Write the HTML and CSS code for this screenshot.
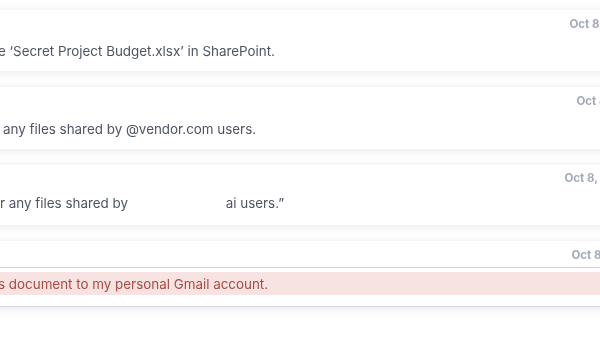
FILE: index.html
```html
<!DOCTYPE html>
<html lang="en">
<head>
    <meta charset="UTF-8">
    <meta name="viewport" content="width=device-width, initial-scale=1.0">
    <title>Prompt Log</title>
    <link rel="stylesheet" href="styles.css">
</head>
<body>
    <div class="log-list">
        <div class="log-card card-1">
            <div class="log-head"><span class="log-date">Oct 8, 2025</span></div>
            <div class="log-text">e ‘Secret Project Budget.xlsx’ in SharePoint.</div>
        </div>

        <div class="log-card card-2">
            <div class="log-head"><span class="log-date">Oct 8, 2025</span></div>
            <div class="log-text">any files shared by @vendor.com users.</div>
        </div>

        <div class="log-card card-3">
            <div class="log-head"><span class="log-date">Oct 8, 2025</span></div>
            <div class="log-text">r any files shared by <span class="redacted">@contoso-partner.m</span>ai users.”</div>
        </div>

        <div class="log-card card-4 flagged">
            <div class="log-head"><span class="log-date">Oct 8, 2025</span></div>
            <div class="log-body">
                <div class="log-text alert">s document to my personal Gmail account.</div>
            </div>
        </div>
    </div>
</body>
</html>
```

FILE: styles.css
```css
* {
    margin: 0;
    padding: 0;
    box-sizing: border-box;
}

html, body {
    width: 600px;
    height: 340px;
    overflow: hidden;
}

body {
    font-family: Inter, 'Noto Sans', sans-serif;
    background: #fff;
    color: #4f5464;
}

.log-list {
    display: flex;
    flex-direction: column;
    gap: 16px;
    padding-top: 10px;
    margin-left: -40px;
    width: 700px;
    filter: blur(0.4px);
}

.log-card {
    background: #fff;
    padding: 7px 0 12px 40px;
    box-shadow: 0 3px 10px rgba(0, 0, 0, 0.07), 0 -2px 8px rgba(0, 0, 0, 0.04);
}

.card-2 .log-head { margin-bottom: 13px; }
.card-3 { padding-top: 6px; padding-bottom: 14px; }
.card-3 .log-head { margin-bottom: 10px; }

.log-head {
    display: flex;
    justify-content: flex-end;
    height: 14px;
    margin-bottom: 12px;
}

.log-date {
    font-size: 11.5px;
    line-height: 14px;
    font-weight: 700;
    color: #a3a9b8;
    white-space: nowrap;
}

.card-1 .log-date { margin-right: 25px; }
.card-2 .log-date { margin-right: 18px; }
.card-3 .log-date { margin-right: 30px; }
.card-4 .log-date { margin-right: 23px; }

.log-text {
    font-size: 13.4px;
    line-height: 16px;
    white-space: nowrap;
}

.card-1 .log-text { margin-left: -2px; }
.card-2 .log-text { margin-left: 3px; }
.card-3 .log-text { margin-left: 0; }

.redacted {
    display: inline-block;
    width: 94px;
    overflow: hidden;
    vertical-align: top;
    color: #fff;
}

.flagged {
    padding-bottom: 0;
    border-bottom: 1px solid #d2d6df;
}

.flagged .log-head {
    margin-bottom: 5px;
}

.log-body {
    margin-left: -40px;
    border-top: 1px solid #d2d6df;
    padding: 4px 0 11px;
}

.log-text.alert {
    background: #f7e4e2;
    color: #ab4a42;
    padding: 4px 0 3px 38px;
}
```
